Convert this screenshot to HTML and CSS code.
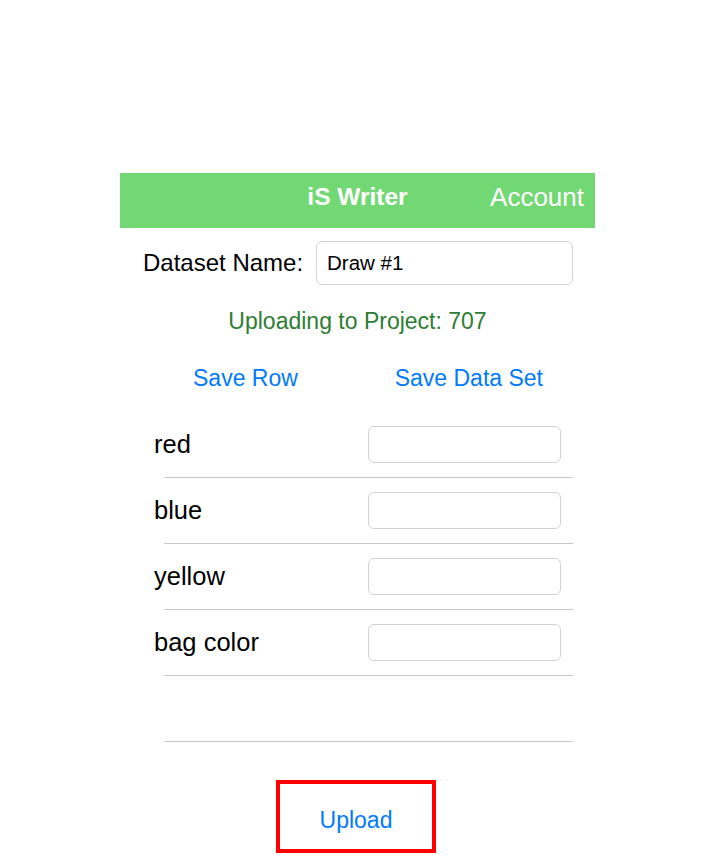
FILE: index.html
```html
<!DOCTYPE html>
<html>
<head>
<meta charset="utf-8">
<link rel="stylesheet" href="styles.css">
</head>
<body>
<div class="panel">
  <header class="navbar">
    <span></span>
    <span class="title">iS Writer</span>
    <span class="account">Account</span>
  </header>
  <div class="dataset">
    <label class="dataset-label">Dataset Name:</label>
    <div class="dataset-input">Draw #1</div>
  </div>
  <div class="project">Uploading to Project: 707</div>
  <div class="actions">
    <span class="link save-row">Save Row</span>
    <span class="link save-set">Save Data Set</span>
  </div>
  <div class="rows">
    <div class="row"><span class="row-label">red</span><span class="row-input"></span></div>
    <div class="row"><span class="row-label">blue</span><span class="row-input"></span></div>
    <div class="row"><span class="row-label">yellow</span><span class="row-input"></span></div>
    <div class="row"><span class="row-label">bag color</span><span class="row-input"></span></div>
    <div class="row empty"></div>
  </div>
  <div class="upload-wrap">
    <div class="upload">Upload</div>
  </div>
</div>
</body>
</html>
```

FILE: styles.css
```css
html, body {
  margin: 0;
  padding: 0;
  background: #ffffff;
}
body {
  font-family: "Liberation Sans", Arial, sans-serif;
  color: #000;
  width: 720px;
  height: 864px;
  overflow: hidden;
}
.panel {
  width: 475px;
  margin-left: 120px;
  padding-top: 173px;
  display: flex;
  flex-direction: column;
}
.navbar {
  height: 55px;
  box-sizing: border-box;
  padding-bottom: 7px;
  background: #72d874;
  display: grid;
  grid-template-columns: 1fr auto 1fr;
  align-items: center;
  color: #fff;
}
.title {
  font-weight: bold;
  font-size: 24.5px;
}
.account {
  justify-self: end;
  padding-right: 11px;
  font-size: 26px;
}
.dataset {
  display: flex;
  align-items: center;
  margin-top: 13px;
  height: 44px;
}
.dataset-label {
  font-size: 24px;
  margin-left: 23px;
  width: 173px;
}
.dataset-input {
  width: 257px;
  height: 44px;
  box-sizing: border-box;
  border: 1px solid #d2d2d2;
  border-radius: 6px;
  font-size: 20.5px;
  padding-left: 10px;
  display: flex;
  align-items: center;
}
.project {
  margin-top: 22px;
  text-align: center;
  color: #2e7d32;
  font-size: 23px;
  height: 28px;
  line-height: 28px;
}
.actions {
  display: flex;
  margin-top: 29px;
  height: 28px;
  line-height: 28px;
  padding-left: 73px;
}
.link {
  color: #007aff;
  font-size: 23px;
}
.save-set {
  margin-left: auto;
  margin-right: 52px;
}
.rows {
  margin-top: 20px;
  display: flex;
  flex-direction: column;
}
.row {
  height: 66px;
  box-sizing: border-box;
  display: flex;
  align-items: center;
  border-bottom: 1px solid #c8c7cc;
  margin-left: 44px;
  margin-right: 22px;
}
.row-label {
  font-size: 25.5px;
  margin-left: -10px;
  width: 214px;
}
.row-input {
  width: 193px;
  height: 37px;
  box-sizing: border-box;
  border: 1px solid #d2d2d2;
  border-radius: 6px;
}
.upload-wrap {
  display: flex;
  justify-content: center;
  margin-top: 38px;
}
.upload {
  width: 160px;
  height: 73px;
  box-sizing: border-box;
  border: 4px solid #ff0000;
  padding-top: 7px;
  color: #007aff;
  font-size: 23px;
  display: flex;
  align-items: center;
  justify-content: center;
  margin-left: -3px;
}
```
